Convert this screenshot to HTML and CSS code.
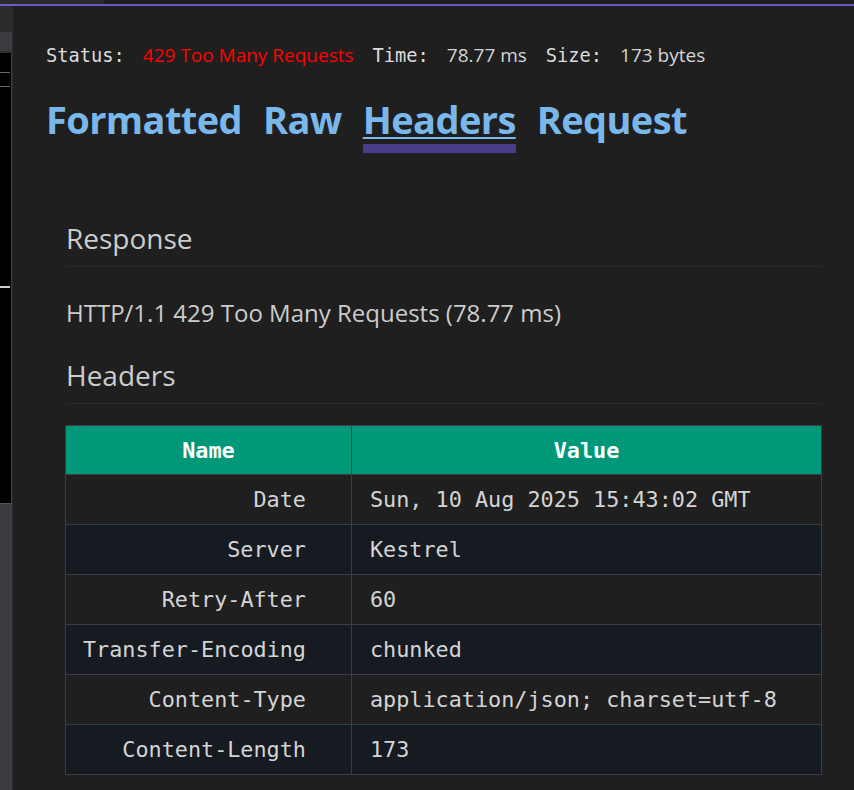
FILE: index.html
```html
<!DOCTYPE html>
<html>
<head>
<meta charset="utf-8">
<link rel="stylesheet" href="styles.css">
</head>
<body>
<div class="topbar"><div class="topbar-tab"></div></div>
<div class="accent"></div>
<div class="layout">
  <aside class="side">
    <div class="side-head"></div>
    <div class="side-mid"></div>
    <div class="side-panel">
      <div class="side-line l1"></div>
      <div class="side-line l2"></div>
      <div class="side-mark"></div>
    </div>
    <div class="side-foot"></div>
  </aside>
  <main class="content">
    <div class="status">
      <span class="label">Status:</span><span class="val err">429 Too Many Requests</span>
      <span class="label">Time:</span><span class="val">78.77 ms</span>
      <span class="label">Size:</span><span class="val">173 bytes</span>
    </div>
    <nav class="tabs">
      <a class="tab">Formatted</a>
      <a class="tab">Raw</a>
      <a class="tab active">Headers</a>
      <a class="tab">Request</a>
    </nav>
    <section class="panel">
      <h2 class="heading">Response</h2>
      <p class="statusline">HTTP/1.1 429 Too Many Requests (78.77 ms)</p>
      <h2 class="heading">Headers</h2>
      <table class="headers">
        <thead>
          <tr><th>Name</th><th>Value</th></tr>
        </thead>
        <tbody>
          <tr><td class="name">Date</td><td class="value">Sun, 10 Aug 2025 15:43:02 GMT</td></tr>
          <tr><td class="name">Server</td><td class="value">Kestrel</td></tr>
          <tr><td class="name">Retry-After</td><td class="value">60</td></tr>
          <tr><td class="name">Transfer-Encoding</td><td class="value">chunked</td></tr>
          <tr><td class="name">Content-Type</td><td class="value">application/json; charset=utf-8</td></tr>
          <tr><td class="name">Content-Length</td><td class="value">173</td></tr>
        </tbody>
      </table>
    </section>
  </main>
</div>
</body>
</html>
```
FILE: styles.css
```css
html, body {
  margin: 0;
  padding: 0;
  background: #1f1f1f;
  height: 790px;
  overflow: hidden;
}
body {
  font-family: "Open Sans", "Noto Sans", sans-serif;
  color: #cccccc;
}
.topbar {
  height: 4px;
  background: #1f1f1f;
}
.topbar-tab {
  width: 104px;
  height: 4px;
  background: #2b2b2b;
}
.accent {
  height: 2px;
  background: #6a5acd;
}
.layout {
  display: flex;
  height: 784px;
}
.side {
  width: 12px;
  flex: none;
  display: flex;
  flex-direction: column;
  border-right: 1px solid #2b2b2b;
}
.side-head {
  height: 26px;
  background: #2b2b2b;
}
.side-mid {
  height: 19px;
  background: #3b3b3f;
}
.side-panel {
  height: 450px;
  background: #000;
  border-top: 2px solid #2f2f2f;
  border-right: 1px solid #3a3a3a;
  position: relative;
}
.side-line {
  position: absolute;
  left: 0;
  right: 1px;
  height: 1px;
  background: #6a6a6a;
}
.l1 { top: 19px; }
.l2 { top: 33px; }
.side-mark {
  position: absolute;
  left: 0;
  right: 1px;
  top: 233px;
  height: 2px;
  background: #d0d0d0;
}
.side-foot {
  flex: 1;
  background: #3a3a3f;
  border-top: 1px solid #555;
}
.content {
  flex: 1;
  padding: 36px 32px 0 33px;
  min-width: 0;
}
.status {
  display: flex;
  align-items: baseline;
  height: 24px;
}
.label {
  font-family: "DejaVu Sans Mono", monospace;
  font-size: 18.7px;
  color: #dcdcdc;
  margin-right: 18px;
}
.val {
  font-size: 19px;
  color: #d4d4d4;
  margin-right: 19px;
}
.val.err {
  color: #ff0000;
}
.tabs {
  display: flex;
  gap: 21px;
  margin-top: 28px;
  height: 60px;
  align-items: flex-start;
}
.tab {
  font-size: 38px;
  font-weight: 700;
  color: #7ab8ec;
  line-height: 50px;
  letter-spacing: -0.6px;
}
.tab.active {
  text-decoration: underline;
  text-decoration-thickness: 2px;
  text-underline-offset: 3px;
  border-bottom: 9px solid #483d8b;
}
.panel {
  padding: 64px 0 0 20px;
}
.heading {
  margin: 0;
  font-size: 28px;
  font-weight: 400;
  color: #cccccc;
  line-height: 40px;
  padding-bottom: 8px;
  border-bottom: 1px solid #2a2a2a;
}
.statusline {
  margin: 31px 0 27px;
  font-size: 24px;
  line-height: 30px;
  color: #cccccc;
}
.headers {
  margin-top: 21px;
  width: calc(100% + 1px);
  margin-left: -1px;
  border-collapse: collapse;
  font-family: "DejaVu Sans Mono", monospace;
  font-size: 21.8px;
  color: #d4d4d4;
}
.headers th {
  background: #009879;
  color: #ffffff;
  font-weight: 700;
  height: 48px;
  padding: 0;
  border: 1px solid #3a3d44;
  text-align: center;
}
.headers th:first-child {
  width: 285px;
}
.headers td {
  height: 49px;
  padding: 0;
  border: 1px solid #3a3d44;
}
.headers tbody tr:nth-child(odd) td {
  background: #1f1f1f;
}
.headers tbody tr:nth-child(even) td {
  background: #161a21;
}
.headers td.name {
  text-align: right;
  padding-right: 45px;
}
.headers td.value {
  padding-left: 18px;
}
```
